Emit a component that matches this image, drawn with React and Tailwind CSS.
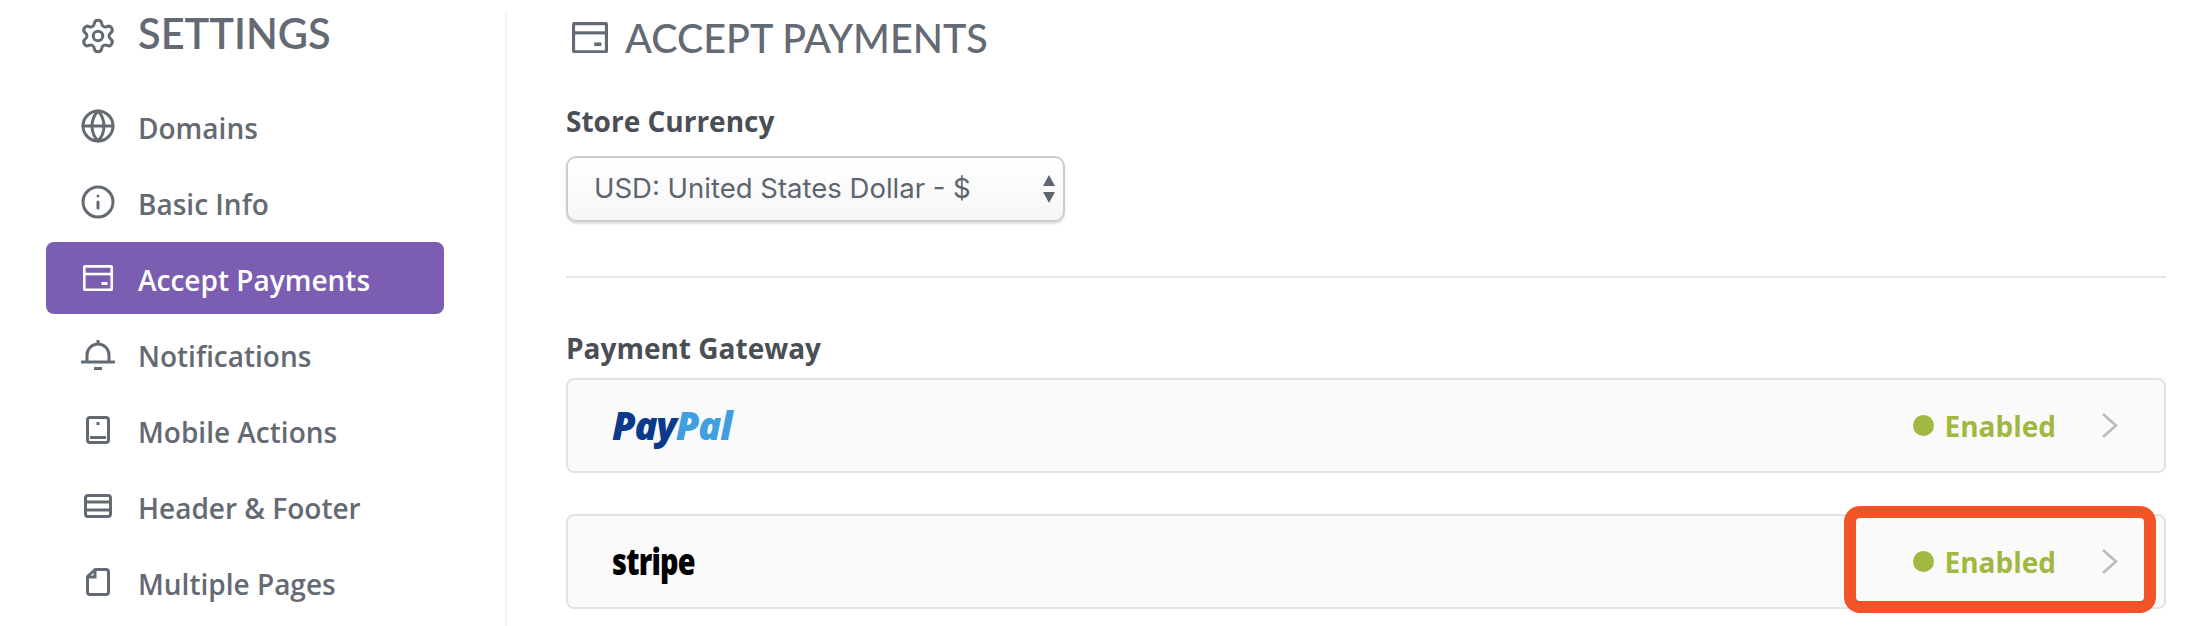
import { Globe, Info, Settings } from 'lucide-react';

const BellIcon = () => (
  <svg width="34" height="32" viewBox="0 0 34 32" fill="none" stroke="currentColor" strokeWidth="3">
    <path d="M6 23V17a11 11 0 0 1 22 0v6" />
    <path d="M1 24h32" strokeLinecap="round" />
    <path d="M17 2v3" />
    <path d="M13 30.5h8" />
  </svg>
);

const MobileIcon = () => (
  <svg width="24" height="28" viewBox="0 0 24 28" fill="none" stroke="currentColor" strokeWidth="3">
    <rect x="1.5" y="1.5" width="21" height="25" rx="2.5" />
    <path d="M4 21.5h16" />
    <path d="M10.5 7.5h3" />
  </svg>
);

const HeaderIcon = () => (
  <svg width="28" height="24" viewBox="0 0 28 24" fill="none" stroke="currentColor" strokeWidth="3">
    <rect x="1.5" y="1.5" width="25" height="21" rx="2.5" />
    <path d="M2 8h24" />
    <path d="M2 16h24" />
  </svg>
);

const PageIcon = () => (
  <svg width="24" height="28" viewBox="0 0 24 28" fill="none" stroke="currentColor" strokeWidth="3">
    <path d="M9 1.5h11a2.5 2.5 0 0 1 2.5 2.5v20a2.5 2.5 0 0 1-2.5 2.5H4A2.5 2.5 0 0 1 1.5 24V8.5z" strokeLinejoin="round" />
    <path d="M9 2v7H2" />
  </svg>
);

const PaymentIcon = ({ size = 30 }) => (
  <svg width={size} height={size * 0.87} viewBox="0 0 30 26" fill="none" stroke="currentColor" strokeWidth="2.6">
    <rect x="1.3" y="1.3" width="27.4" height="23.4" rx="0.5" />
    <path d="M2 9h26" />
    <path d="M18.5 18.5h6" strokeWidth="3" />
  </svg>
);

const navItems = [
  { label: 'Domains', icon: <Globe size={36} strokeWidth={2} /> },
  { label: 'Basic Info', icon: <Info size={36} strokeWidth={2} /> },
  { label: 'Accept Payments', icon: <PaymentIcon />, active: true },
  { label: 'Notifications', icon: <BellIcon /> },
  { label: 'Mobile Actions', icon: <MobileIcon /> },
  { label: 'Header & Footer', icon: <HeaderIcon /> },
  { label: 'Multiple Pages', icon: <PageIcon /> },
];

const NavItem = ({ label, icon, active }) => (
  <div
    className={`flex h-[72px] items-center rounded-lg ${
      active ? 'bg-[#7b5db1] text-white' : 'text-[#646a73]'
    }`}
  >
    <div className="w-[92px] shrink-0 pl-[33px]">
      <span className="flex h-[38px] w-[38px] items-center justify-center">{icon}</span>
    </div>
    <span className="pt-[3px] text-[28px] font-semibold">{label}</span>
  </div>
);

const StatusRow = ({ children, highlighted }) => (
  <div className="relative flex h-[95px] items-center justify-between rounded-lg border-2 border-[#e2e2e2] bg-[#fafafa] pl-[44px] pr-[46px]">
    {children}
    <div className="flex items-center">
      <span className="h-[21px] w-[21px] rounded-full bg-[#a0b83f]" />
      <span className="ml-[10px] text-[28px] font-bold text-[#a0b83f]">Enabled</span>
      <svg className="ml-[45px]" width="17" height="27" viewBox="0 0 17 27" fill="none" stroke="#b9bcc4" strokeWidth="2.8">
        <path d="M2 2l13 11.5L2 25" />
      </svg>
    </div>
    {highlighted && (
      <div className="absolute right-[8px] top-[-10px] h-[107px] w-[312px] rounded-[16px] border-[12px] border-[#f25327]" />
    )}
  </div>
);

export default function App() {
  return (
    <div className="flex h-[626px] w-[2206px] overflow-hidden bg-white font-['Open_Sans',sans-serif]">
      <aside className="mt-3 h-[614px] w-[507px] shrink-0 border-r-2 border-[#f3f3f3] pl-[46px]">
        <div className="flex h-[78px] w-[398px] items-start text-[#646a73]">
          <div className="w-[92px] shrink-0 pl-[33px] pt-[5px]">
            <Settings size={38} strokeWidth={1.9} />
          </div>
          <h1 className="-mt-[2px] font-['Lato',sans-serif] text-[41.5px] font-semibold leading-[46px]">SETTINGS</h1>
        </div>
        <nav className="flex w-[398px] flex-col gap-1">
          {navItems.map((item) => (
            <NavItem key={item.label} {...item} />
          ))}
        </nav>
      </aside>

      <main className="flex-1 pl-[59px] pr-[40px]">
        <div className="flex h-[75px] items-center pl-[6px] text-[#646a73]">
          <PaymentIcon size={36} />
          <h2 className="ml-[17px] font-['Lato',sans-serif] text-[39.5px] font-medium leading-none">ACCEPT PAYMENTS</h2>
        </div>

        <label className="mt-[27px] block text-[28px] font-bold leading-[38px] text-[#4a4e55]">Store Currency</label>
        <div className="mt-[16px] flex h-[66px] w-[499px] items-center justify-between rounded-[10px] border-2 border-[#cbcdd2] bg-gradient-to-b from-white to-[#f6f6f6] pl-[26px] pr-[7px] shadow-[0_2px_2px_rgba(0,0,0,0.12)]">
          <span className="font-['Inter',sans-serif] text-[27.5px] text-[#5c6570]">USD: United States Dollar - $</span>
          <svg width="14" height="28" viewBox="0 0 14 28" fill="#5c6570">
            <path d="M7 0l6 11H1z" />
            <path d="M7 28l6-11H1z" />
          </svg>
        </div>

        <div className="mt-[54px] h-[2px] bg-[#e6e6e8]" />

        <h3 className="mt-[51px] text-[28px] font-bold leading-[38px] text-[#4a4e55]">Payment Gateway</h3>
        <div className="mt-[11px] flex flex-col gap-[41px]">
          <StatusRow>
            <span className="mb-[2px] font-['Open_Sans',sans-serif] text-[38px] font-extrabold italic leading-none tracking-[-1.2px]">
              <span className="text-[#0b3a8c]">Pay</span>
              <span className="text-[#3f9fe0]">Pal</span>
            </span>
          </StatusRow>
          <StatusRow highlighted>
            <span className="mb-[2px] origin-left scale-x-[0.78] font-['Open_Sans',sans-serif] text-[37px] font-extrabold leading-none tracking-[-1px] text-black">stripe</span>
          </StatusRow>
        </div>
      </main>
    </div>
  );
}
